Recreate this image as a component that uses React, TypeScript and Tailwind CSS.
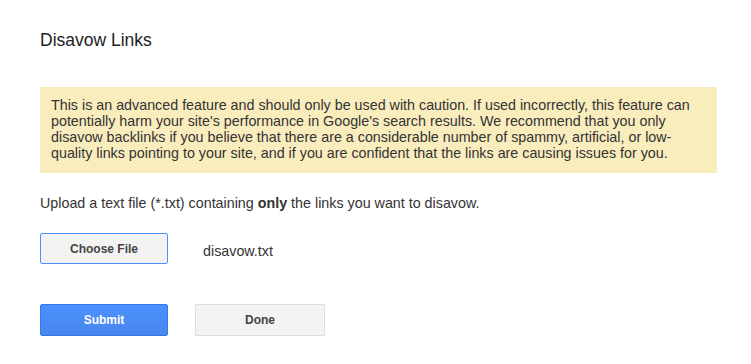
export default function App() {
  return (
    <div className="min-h-[364px] w-full bg-white font-['Liberation_Sans',Arial,sans-serif] text-[14.3px] text-[#333]">
      <div className="pl-10 pr-[34px] pt-[29px]">
        <h1 className="text-[17.5px] leading-[22px] text-[#222]">Disavow Links</h1>

        {/* warning */}
        <div className="mt-[36px] bg-[#f9edbe] px-[11px] pb-[12px] pt-[10px] leading-[16px] text-[#333]">
          This is an advanced feature and should only be used with caution. If used incorrectly, this feature can
          potentially harm your site's performance in Google's search results. We recommend that you only disavow
          backlinks if you believe that there are a considerable number of spammy, artificial, or low-quality links
          pointing to your site, and if you are confident that the links are causing issues for you.
        </div>

        <p className="mt-[22px] leading-[16px]">
          Upload a text file (*.txt) containing <b>only</b> the links you want to disavow.
        </p>

        <div className="mt-[22px] flex items-center">
          <button className="h-[31px] w-[128px] rounded-[2px] border border-[#4d90fe] bg-[#f3f3f3] text-[12px] font-bold text-[#444]">
            Choose File
          </button>
          <span className="ml-[35px] mt-[6px] text-[#333]">disavow.txt</span>
        </div>

        <div className="mt-[40px] flex gap-[27px]">
          <button className="h-[32px] w-[128px] rounded-[2px] border border-[#3079ed] bg-gradient-to-b from-[#4d90fe] to-[#4787ed] text-[12px] font-bold text-white">
            Submit
          </button>
          <button className="h-[32px] w-[130px] rounded-[2px] border border-[#dcdcdc] bg-[#f3f3f3] text-[12px] font-bold text-[#444]">
            Done
          </button>
        </div>
      </div>
    </div>
  )
}
